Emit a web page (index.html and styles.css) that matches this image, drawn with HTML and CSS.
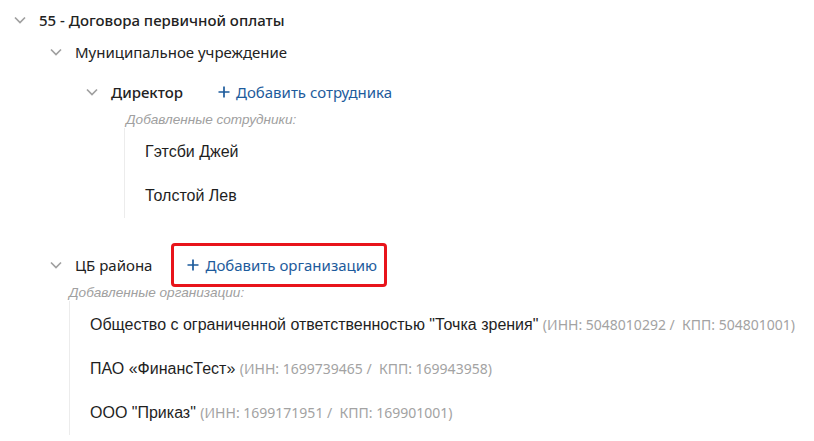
FILE: index.html
```html
<!DOCTYPE html>
<html lang="ru">

<head>
  <meta charset="UTF-8" />
  <meta name="viewport" content="width=device-width, initial-scale=1.0" />
  <title>Договора</title>
  <link rel="stylesheet" href="styles.css">
</head>

<body>
  <div class="tree">
    <div class="node">
      <div class="row">
        <span class="chevron"><svg width="12" height="8" viewBox="0 0 12 8"><path d="M1 1.5l5 5 5-5" /></svg></span>
        <span class="title strong">55 - Договора первичной оплаты</span>
      </div>

      <div class="children">
        <div class="node">
          <div class="row">
            <span class="chevron"><svg width="12" height="8" viewBox="0 0 12 8"><path d="M1 1.5l5 5 5-5" /></svg></span>
            <span class="title">Муниципальное учреждение</span>
          </div>

          <div class="children">
            <div class="node">
              <div class="row tall">
                <span class="chevron"><svg width="12" height="8" viewBox="0 0 12 8"><path d="M1 1.5l5 5 5-5" /></svg></span>
                <span class="title strong">Директор</span>
                <button class="add">
                  <svg width="12" height="12" viewBox="0 0 12 12"><path d="M6 0.5v11M0.5 6h11" /></svg>
                  Добавить сотрудника
                </button>
              </div>
              <div class="added employees">
                <div class="caption">Добавленные сотрудники:</div>
                <ul class="list">
                  <li>Гэтсби Джей</li>
                  <li>Толстой Лев</li>
                </ul>
              </div>
            </div>
          </div>
        </div>

        <div class="node next">
          <div class="row tall">
            <span class="chevron"><svg width="12" height="8" viewBox="0 0 12 8"><path d="M1 1.5l5 5 5-5" /></svg></span>
            <span class="title">ЦБ района</span>
            <button class="add marked">
              <svg width="12" height="12" viewBox="0 0 12 12"><path d="M6 0.5v11M0.5 6h11" /></svg>
              Добавить организацию
            </button>
          </div>
          <div class="added orgs">
            <div class="caption">Добавленные организации:</div>
            <ul class="list">
              <li>Общество с ограниченной ответственностью "Точка зрения" <span class="req">(ИНН: 5048010292 /&nbsp; КПП: 504801001)</span></li>
              <li>ПАО «ФинансТест» <span class="req">(ИНН: 1699739465 /&nbsp; КПП: 169943958)</span></li>
              <li>ООО "Приказ" <span class="req">(ИНН: 1699171951 /&nbsp; КПП: 169901001)</span></li>
            </ul>
          </div>
        </div>
      </div>
    </div>
  </div>
</body>

</html>
```

FILE: styles.css
```css
* {
  margin: 0;
  padding: 0;
  box-sizing: border-box;
}

body {
  background: #fff;
  color: #222;
  font-family: "Noto Sans", "Open Sans", sans-serif;
  font-size: 15px;
  overflow: hidden;
}

.tree {
  padding: 8px 0 0 14px;
}

.row {
  display: flex;
  align-items: center;
  height: 24px;
}

.row.tall {
  height: 40px;
}

.children {
  padding-left: 36px;
}

.children>.node {
  margin-top: 8px;
}

.children>.node.next {
  margin-top: 27px;
}

.chevron {
  display: flex;
  width: 25px;
  flex-shrink: 0;
}

.chevron svg {
  fill: none;
  stroke: #a0a0a0;
  stroke-width: 1.7;
}

.title {
  white-space: nowrap;
}

.title.strong {
  font-weight: 500;
}

.add {
  display: flex;
  align-items: center;
  gap: 6px;
  height: 40px;
  margin-left: 21px;
  padding: 0 8px 0 14px;
  border: none;
  background: none;
  color: #1d5b9c;
  font-family: inherit;
  font-size: 15px;
  cursor: pointer;
}

.add svg {
  fill: none;
  stroke: #1d5b9c;
  stroke-width: 1.7;
}

.add.marked {
  outline: 3px solid #e8141b;
  outline-offset: -1px;
  border-radius: 2px;
}

.caption {
  height: 16px;
  line-height: 16px;
  font-family: "Liberation Sans", Arial, sans-serif;
  font-size: 13.6px;
  font-style: italic;
  color: #a0a0a0;
}

.employees .caption {
  margin-left: 40px;
}

.employees .list {
  margin-left: 38px;
}

.orgs .caption {
  margin-left: 19px;
}

.orgs .list {
  margin-left: 19px;
}

.list {
  list-style: none;
  border-left: 1px solid #ececec;
  padding: 2px 0 0 20px;
}

.list li {
  height: 44px;
  line-height: 44px;
  font-family: "Liberation Sans", Arial, sans-serif;
  font-size: 16px;
  color: #1f1f1f;
  white-space: nowrap;
}

.req {
  font-family: "Noto Sans", sans-serif;
  font-size: 14px;
  color: #a3a3a3;
}
```
